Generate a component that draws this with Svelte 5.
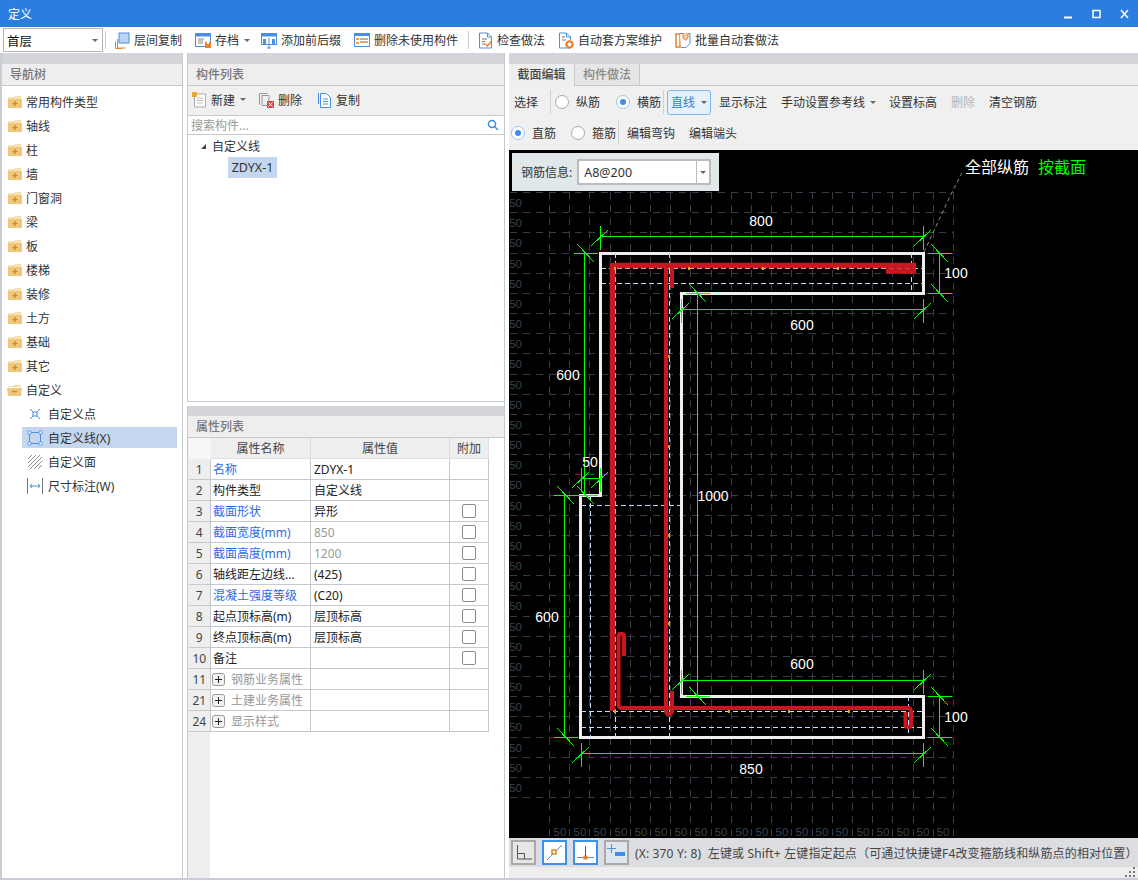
<script>
  const navItems = ['常用构件类型', '轴线', '柱', '墙', '门窗洞', '梁', '板', '楼梯', '装修', '土方', '基础', '其它'];

  const props = [
    { no: 1, name: '名称', value: 'ZDYX-1', blue: true },
    { no: 2, name: '构件类型', value: '自定义线' },
    { no: 3, name: '截面形状', value: '异形', blue: true, check: true },
    { no: 4, name: '截面宽度(mm)', value: '850', blue: true, check: true, dim: true },
    { no: 5, name: '截面高度(mm)', value: '1200', blue: true, check: true, dim: true },
    { no: 6, name: '轴线距左边线...', value: '(425)', check: true },
    { no: 7, name: '混凝土强度等级', value: '(C20)', blue: true, check: true },
    { no: 8, name: '起点顶标高(m)', value: '层顶标高', check: true },
    { no: 9, name: '终点顶标高(m)', value: '层顶标高', check: true },
    { no: 10, name: '备注', value: '', check: true },
    { no: 11, name: '钢筋业务属性', group: true },
    { no: 21, name: '土建业务属性', group: true },
    { no: 24, name: '显示样式', group: true }
  ];

  // canvas drawing, coordinates are page pixels (see viewBox)
  const gridX = Array.from({ length: 21 }, (_, i) => Math.round(549 + 20.2 * i) + 0.5);
  const gridY = Array.from({ length: 31 }, (_, i) => Math.round(192 + 20.17 * i) + 0.5);
  const sideLabels = Array.from({ length: 30 }, (_, i) => Math.round(207 + 20.17 * i));
  const bottomLabels = Array.from({ length: 20 }, (_, i) => Math.round(560 + 20.17 * i));

  const tickV = (x, y) => [[x, y - 11, x, y + 13], [x - 9, y + 9, x + 8, y - 7]];
  const tickH = (x, y) => [[x - 12, y, x + 12, y], [x - 8, y - 9, x + 9, y + 9]];

  const green = [
    [600, 236, 923, 236], ...tickV(600, 236), ...tickV(923, 236),
    [584, 253, 584, 495], ...tickH(585, 253), ...tickH(585, 495),
    [564, 495, 564, 737], ...tickH(565, 495), ...tickH(565, 737),
    [581, 478, 600, 478], ...tickV(581, 478), ...tickV(600, 478),
    [681, 309, 923, 309], ...tickV(681, 309), ...tickV(923, 309),
    [697, 293, 697, 696], ...tickH(697, 293), ...tickH(697, 696),
    [939, 253, 939, 293], ...tickH(939, 253), ...tickH(939, 293),
    [939, 696, 939, 737], ...tickH(939, 696), ...tickH(939, 737),
    [681, 680, 923, 680], ...tickV(681, 680), ...tickV(923, 680),
    [581, 753, 923, 753], ...tickV(581, 753), ...tickV(923, 753)
  ];

  const dashed = [
    [601, 268.5, 923, 268.5], [601, 283.5, 923, 283.5],
    [581, 711.5, 923, 711.5], [581, 727.5, 923, 727.5],
    [581, 505.5, 681, 505.5],
    [615.5, 253, 615.5, 737], [669.5, 253, 669.5, 737],
    [590.5, 495, 590.5, 737],
    [911.5, 253, 911.5, 294], [908.5, 696, 908.5, 737]
  ];

  const marks = [[614, 267], [688, 267], [762, 267], [837, 267], [668, 355], [668, 445], [668, 534], [668, 622], [614, 710], [728, 710], [788, 710], [848, 710]];

  const dimLabels = [
    ['800', 761, 226], ['600', 802, 330], ['100', 956, 278], ['600', 568, 380], ['50', 590, 467],
    ['1000', 713, 501], ['600', 547, 622], ['600', 802, 669], ['100', 956, 722], ['850', 751, 774]
  ];
</script>

{#snippet folder(open)}
  <svg class="ico" width="16" height="14" viewBox="0 0 16 14">
    {#if open}
      <path d="M1 3h5l1-1h7v2H1z" fill="#f4dca6" />
      <path d="M0 5h15l-1 8H1z" fill="#efc87e" />
      <path d="M5 8.500h5" stroke="#c98f2c" stroke-width="1.500" />
    {:else}
      <path d="M1 2h6l1-1h6v3H1z" fill="#f6e2b5" />
      <rect x="1" y="4" width="14" height="9" fill="#efc87e" />
      <path d="M8 6v5M5.500 8.500h5" stroke="#c98f2c" stroke-width="1.500" />
    {/if}
  </svg>
{/snippet}

<div class="window">
  <header class="titlebar">
    <span class="title">定义</span>
    <div class="winbtns">
      <svg width="70" height="14" viewBox="0 0 70 14">
        <path d="M3 10.500h8" stroke="#fff" stroke-width="2" />
        <rect x="32" y="3.500" width="7" height="7" fill="none" stroke="#fff" stroke-width="1.500" />
        <path d="M60 3l7 8M67 3l-7 8" stroke="#fff" stroke-width="1.500" />
      </svg>
    </div>
  </header>

  <div class="toolbar">
    <div class="floor">首层<i class="caret"></i></div>
    <span class="sep"></span>
    <div class="tools">
      <span class="tool">
        <svg class="ico" width="16" height="17" viewBox="-1 0 16 17">
          <path d="M2.500 7v9h8M0.500 9.500v7h6" fill="none" stroke="#e8822a" />
          <rect x="4" y="1" width="10" height="10" fill="#b9d4f5" stroke="#4a90e2" />
        </svg>
        层间复制
      </span>
      <span class="tool narrow">
        <svg class="ico" width="16" height="16" viewBox="0 0 16 16">
          <rect x="0.500" y="1.500" width="15" height="13" fill="#fff" stroke="#4a90e2" />
          <rect x="0.500" y="1.500" width="15" height="3" fill="#4a90e2" />
          <path d="M3 7h6M3 9h5M3 11h5" stroke="#888" />
          <rect x="10" y="10" width="6" height="6" fill="#e8822a" />
          <rect x="12" y="10" width="2" height="2" fill="#fff" />
        </svg>
        存档<i class="caret tool-caret"></i>
      </span>
      <span class="tool">
        <svg class="ico" width="16" height="17" viewBox="0 0 16 17">
          <rect x="0.500" y="1.500" width="15" height="11" fill="#fff" stroke="#4a90e2" />
          <rect x="0.500" y="1.500" width="15" height="3" fill="#4a90e2" />
          <rect x="2" y="7" width="3" height="5" fill="#4a90e2" />
          <rect x="11" y="7" width="3" height="5" fill="#4a90e2" />
          <path d="M8 6v10M6 16h4" stroke="#4a90e2" />
        </svg>
        添加前后缀
      </span>
      <span class="tool">
        <svg class="ico" width="16" height="16" viewBox="0 0 16 16">
          <rect x="0.500" y="1.500" width="15" height="13" fill="#fff" stroke="#4a90e2" />
          <rect x="0.500" y="1.500" width="15" height="2.500" fill="#4a90e2" />
          <path d="M6 7h8M6 10h8" stroke="#666" />
          <path d="M2 6h3v2H2zM2 10h3v2H2z" fill="#f2a33a" />
        </svg>
        删除未使用构件
      </span>
      <span class="sep wide"></span>
      <span class="tool">
        <svg class="ico" width="15" height="17" viewBox="0 0 15 17">
          <path d="M1.500 1v15h12V5l-4-4z" fill="#fff" stroke="#4a90e2" />
          <path d="M9.500 1v4h4" fill="none" stroke="#4a90e2" />
          <path d="M4 7h5M4 9.500h3M4 12h3" stroke="#777" />
          <path d="M7.500 12l2 2 4-5" fill="none" stroke="#e8822a" stroke-width="1.500" />
        </svg>
        检查做法
      </span>
      <span class="tool">
        <svg class="ico" width="16" height="17" viewBox="0 0 16 17">
          <path d="M1.500 1v15h8M12.500 8V5l-4-4h-7" fill="#fff" stroke="#4a90e2" />
          <path d="M8.500 1v4h4" fill="none" stroke="#4a90e2" />
          <path d="M4 5h3M4 8h4" stroke="#777" />
          <circle cx="11.500" cy="12.500" r="3" fill="none" stroke="#e8822a" stroke-width="2" />
          <path d="M11.500 8v1.500M11.500 15.500V17M7 12.500h1.500M14.500 12.500H16" stroke="#e8822a" stroke-width="1.500" />
        </svg>
        自动套方案维护
      </span>
      <span class="tool">
        <svg class="ico" width="16" height="17" viewBox="0 0 16 17">
          <rect x="1" y="2" width="4" height="13" fill="none" stroke="#e8822a" stroke-width="1.500" />
          <path d="M5 1.500h10v10l-4 4H6" fill="#fff" stroke="#4a90e2" />
          <path d="M8 1v5l2.500 2.500L13 6V1" fill="#f7c99a" stroke="#e8822a" />
        </svg>
        批量自动套做法
      </span>
    </div>
  </div>

  <div class="main">
    <section class="pane left">
      <div class="strip"></div>
      <h2>导航树</h2>
      <div class="nav">
        {#each navItems as item}
          <div class="nav-row">{@render folder(false)}<span>{item}</span></div>
        {/each}
        <div class="nav-row">{@render folder(true)}<span>自定义</span></div>
        <div class="nav-row child">
          <svg class="ico" width="16" height="16" viewBox="0 0 16 16">
            <path d="M3 3l10 10M13 3L3 13" stroke="#4a90e2" />
            <rect x="6" y="6" width="4" height="4" fill="#fff" stroke="#4a90e2" />
          </svg>
          <span>自定义点</span>
        </div>
        <div class="nav-row child selected">
          <svg class="ico" width="16" height="16" viewBox="0 0 16 16">
            <rect x="2.500" y="2.500" width="11" height="11" fill="none" stroke="#4a90e2" />
            <path d="M1 1h3v3H1zM12 1h3v3h-3zM1 12h3v3H1zM12 12h3v3h-3z" fill="#fff" stroke="#4a90e2" stroke-width="0.800" />
          </svg>
          <span>自定义线(X)</span>
        </div>
        <div class="nav-row child">
          <svg class="ico" width="16" height="16" viewBox="0 0 16 16">
            <path d="M1 5l4-4M1 9l8-8M1 13L13 1M3 15L15 3M7 15l8-8M11 15l4-4" stroke="#8a8f98" />
          </svg>
          <span>自定义面</span>
        </div>
        <div class="nav-row child">
          <svg class="ico" width="16" height="16" viewBox="0 0 16 16">
            <path d="M0.500 0v16M15.500 0v16" stroke="#777" />
            <path d="M3 8h10M5 6L3 8l2 2M11 6l2 2-2 2" fill="none" stroke="#4a90e2" />
          </svg>
          <span>尺寸标注(W)</span>
        </div>
      </div>
    </section>

    <div class="pane mid">
      <section class="parts">
        <div class="strip"></div>
        <h2>构件列表</h2>
        <div class="parts-bar">
          <span class="tool">
            <svg class="ico" width="15" height="16" viewBox="0 0 15 16">
              <path d="M2.500 2v13h11V2z" fill="#fff" stroke="#aaa" />
              <path d="M5 6h6M5 8.500h6M5 11h6" stroke="#bbb" />
              <rect x="0" y="0" width="5" height="5" fill="#f2a33a" />
            </svg>
            新建<i class="caret tool-caret"></i>
          </span>
          <span class="tool">
            <svg class="ico" width="15" height="16" viewBox="0 0 15 16">
              <path d="M0.500 1.500h8M0.500 1.500v11M3 3.500h7v10H3z" fill="none" stroke="#999" />
              <rect x="8" y="9" width="7" height="7" fill="#e0454a" />
              <path d="M9.500 10.500l4 4M13.500 10.500l-4 4" stroke="#fff" />
            </svg>
            删除
          </span>
          <span class="tool copy">
            <svg class="ico" width="15" height="16" viewBox="0 0 15 16">
              <path d="M1.500 1v11" stroke="#4a90e2" />
              <path d="M3.500 1.500v14h10v-10l-4-4z" fill="#fff" stroke="#4a90e2" />
              <path d="M6 7h5M6 9.500h5M6 12h5" stroke="#4a90e2" />
            </svg>
            复制
          </span>
        </div>
        <div class="search">
          <span>搜索构件...</span>
          <svg width="12" height="12" viewBox="0 0 12 12">
            <circle cx="5" cy="5" r="3.500" fill="none" stroke="#3b8eea" stroke-width="1.500" />
            <path d="M7.500 7.500L11 11" stroke="#3b8eea" stroke-width="1.500" />
          </svg>
        </div>
        <div class="parts-tree">
          <div class="tree-root"><i class="tri"></i>自定义线</div>
          <div class="tree-leaf">ZDYX-1</div>
        </div>
      </section>

      <section class="props">
        <div class="strip thin"></div>
        <h2>属性列表</h2>
        <div class="props-body">
          <table>
            <colgroup><col class="c0" /><col class="c1" /><col class="c2" /><col class="c3" /></colgroup>
            <thead>
              <tr><th class="corner"></th><th>属性名称</th><th>属性值</th><th>附加</th></tr>
            </thead>
            <tbody>
              {#each props as p}
                <tr>
                  <td class="no">{p.no}</td>
                  <td class="name" class:blue={p.blue} class:group={p.group}>
                    {#if p.group}
                      <svg class="plus" width="13" height="13" viewBox="0 0 13 13">
                        <rect x="0.500" y="0.500" width="12" height="12" rx="2" fill="#f2f2f2" stroke="#999" />
                        <path d="M3 6.500h7M6.500 3v7" stroke="#222" />
                      </svg>
                    {/if}
                    {p.name}
                  </td>
                  <td class:dim={p.dim}>{p.value ?? ''}</td>
                  <td class="chk">{#if p.check}<span class="box"></span>{/if}</td>
                </tr>
              {/each}
            </tbody>
          </table>
        </div>
      </section>
    </div>

    <section class="pane right">
      <div class="strip"></div>
      <div class="tabs">
        <span class="tab active">截面编辑</span>
        <span class="tab">构件做法</span>
      </div>
      <div class="editbar">
        <span class="cmd first">选择</span>
        <span class="vsep"></span>
        <span class="radio"></span><span class="rlabel">纵筋</span>
        <span class="radio on lead"></span><span class="rlabel">横筋</span>
        <span class="vsep tight"></span>
        <span class="linebtn">直线<i class="caret"></i></span>
        <span class="cmd">显示标注</span>
        <span class="cmd guide">手动设置参考线<i class="caret tool-caret"></i></span>
        <span class="cmd">设置标高</span>
        <span class="cmd off">删除</span>
        <span class="cmd">清空钢筋</span>
      </div>
      <div class="editbar second">
        <span class="radio on"></span><span class="rlabel">直筋</span>
        <span class="radio lead2"></span><span class="rlabel">箍筋</span>
        <span class="vsep tight"></span>
        <span class="cmd near">编辑弯钩</span>
        <span class="cmd">编辑端头</span>
      </div>

      <div class="canvas">
        <svg class="drawing" width="629" height="688" viewBox="509 150 629 688">
          <g class="crisp" stroke="#363c48" stroke-dasharray="7 6">
            {#each gridX as x}<line x1={x} y1="192" x2={x} y2="836" />{/each}
            {#each gridY as y}<line x1="510" y1={y} x2="953" y2={y} />{/each}
          </g>
          <g class="faint">
            {#each sideLabels as y}<text x="522" {y} text-anchor="end">50</text>{/each}
            {#each bottomLabels as x}<text {x} y="835.5" text-anchor="middle">50</text>{/each}
          </g>

          <polygon class="crisp" points="600.5,253.5 923.5,253.5 923.5,293.5 681.5,293.5 681.5,696.5 923.5,696.5 923.5,737.5 580.5,737.5 580.5,495.5 600.5,495.5" fill="none" stroke="#eeeeee" stroke-width="3" />

          <g class="crisp" stroke="#c4dcf8" stroke-dasharray="5 3">
            {#each dashed as d}<line x1={d[0]} y1={d[1]} x2={d[2]} y2={d[3]} />{/each}
          </g>

          <g fill="none" stroke="#c8171f" stroke-linejoin="round">
            <path d="M612.500 711V265.500H916" stroke-width="5.500" />
            <path d="M886 271H916" stroke-width="5.500" />
            <path d="M666 265V710Q666 714 669 714Q672 714 672 710V691" stroke-width="4" />
            <path d="M672 265V288" stroke-width="4" />
            <path d="M624 656V636Q624 634 622 634H620Q618.500 634 618.500 636V704Q618.500 708 622 708H908Q911 708 911 712V725Q911 727 908 727Q905.500 727 905.500 725V712" stroke-width="4" />
          </g>
          {#each marks as m}<rect x={m[0]} y={m[1]} width="2" height="3" fill="#e8a41e" />{/each}

          <g class="crisp" stroke="#00ff00" transform="translate(0.5 0.5)">
            {#each green as g}<line x1={g[0]} y1={g[1]} x2={g[2]} y2={g[3]} />{/each}
          </g>
          <polyline points="924,252 953,190 962,173" fill="none" stroke="#8a8a8a" stroke-dasharray="4 3" />

          <g class="dimtext">
            {#each dimLabels as l}<text x={l[1]} y={l[2]} text-anchor="middle">{l[0]}</text>{/each}
          </g>
          <text class="caption" x="965" y="173" fill="#fff">全部纵筋</text>
          <text class="caption" x="1038" y="173" fill="#00ff00">按截面</text>
        </svg>

        <div class="rebar-info">
          <span>钢筋信息:</span>
          <div class="rebar-input"><span class="val">A8@200</span><span class="drop"><i class="caret"></i></span></div>
        </div>
      </div>

      <div class="status">
        <span class="sbtn">
          <svg width="21" height="21" viewBox="0 0 21 21"><path d="M4.500 3v14H19M4.500 11.500h7v5.500" fill="none" stroke="#555" /></svg>
        </span>
        <span class="sbtn on">
          <svg width="21" height="21" viewBox="0 0 21 21"><path d="M3 18L18 3" stroke="#4a90e2" /><rect x="8" y="8" width="4" height="4" fill="#fff" stroke="#e8822a" stroke-width="1.500" /></svg>
        </span>
        <span class="sbtn on">
          <svg width="21" height="21" viewBox="0 0 21 21"><path d="M2 15.500h17" stroke="#4a90e2" /><path d="M10.500 4v11" stroke="#555" /><rect x="8.500" y="13.500" width="4" height="4" fill="#e8822a" /></svg>
        </span>
        <span class="sbtn last">
          <svg width="21" height="21" viewBox="0 0 21 21"><path d="M5.500 2v9M1 6.500h9" stroke="#4a90e2" /><rect x="9" y="10" width="10" height="4" fill="#3b8eea" /></svg>
        </span>
        <span class="status-text">(X: 370 Y: 8)&nbsp; 左键或 Shift+ 左键指定起点（可通过快捷键F4改变箍筋线和纵筋点的相对位置）</span>
      </div>
      <div class="grip">
        <svg width="12" height="10" viewBox="0 0 12 10" fill="#777">
          <rect x="8" y="0" width="2" height="2" /><rect x="4" y="4" width="2" height="2" /><rect x="8" y="4" width="2" height="2" />
          <rect x="0" y="8" width="2" height="2" /><rect x="4" y="8" width="2" height="2" /><rect x="8" y="8" width="2" height="2" />
        </svg>
      </div>
    </section>
  </div>
</div>

<style>
  :global(body) {
    margin: 0;
    background: #fff;
  }

  .window {
    width: 1138px;
    height: 880px;
    display: flex;
    flex-direction: column;
    overflow: hidden;
    font-family: "Noto Sans", "Noto Sans CJK SC", sans-serif;
    font-size: 12px;
    color: #333;
    background: #fff;
  }

  .titlebar {
    height: 27px;
    flex: none;
    background: #2c7de0;
    color: #fff;
    display: flex;
    align-items: center;
    justify-content: space-between;
    padding: 0 7px 0 8px;
  }
  .winbtns { display: flex; margin-top: 1px; }
  .winbtns svg { display: block; }

  .toolbar {
    height: 26px;
    flex: none;
    display: flex;
    align-items: center;
    background: #fff;
    padding-left: 3px;
    box-sizing: border-box;
  }
  .floor {
    width: 100px;
    height: 24px;
    box-sizing: border-box;
    border: 1px solid #b5b5b5;
    padding-left: 3px;
    display: flex;
    align-items: center;
    justify-content: space-between;
    padding-right: 4px;
    font-size: 12.500px;
    color: #111;
  }
  .caret {
    display: inline-block;
    width: 0;
    height: 0;
    border-left: 3px solid transparent;
    border-right: 3px solid transparent;
    border-top: 3px solid #666;
  }
  .tool-caret { margin-left: 5px; }
  .tool .tool-caret { margin-left: 1px; }
  .sep {
    width: 1px;
    height: 18px;
    background: #ccc;
    margin-left: 2px;
    margin-right: 8px;
  }
  .sep.wide { margin: 0 -4px 0 -3px; }
  .tools {
    display: flex;
    align-items: center;
    gap: 13px;
  }
  .tool {
    display: inline-flex;
    align-items: center;
    white-space: nowrap;
    gap: 4px;
  }
  .tool.narrow { margin-right: -2px; }
  .ico { flex: none; display: block; }

  .main {
    flex: 1;
    min-height: 0;
    display: flex;
    border-left: 2px solid #c9cdd6;
    border-bottom: 2px solid #c9cdd6;
  }
  .pane {
    display: flex;
    flex-direction: column;
    min-width: 0;
  }
  .strip {
    height: 11px;
    flex: none;
    background: #d3d5da;
  }
  .strip.thin { height: 10px; }
  h2 {
    margin: 0;
    height: 22px;
    line-height: 22px;
    box-sizing: border-box;
    padding-left: 8px;
    font-size: 12px;
    font-weight: 500;
    color: #777;
    background: #eee;
    border-bottom: 1px solid #c5c8cd;
  }

  .left {
    width: 181px;
    border-right: 1px solid #c5c8cd;
    box-sizing: border-box;
    margin-right: 4px;
  }
  .nav { padding-top: 4px; }
  .nav-row {
    height: 24px;
    display: flex;
    align-items: center;
    gap: 3px;
    padding-left: 5px;
  }
  .nav-row.child {
    padding-left: 25px;
    gap: 5px;
  }
  .nav-row.child.selected {
    background: #c5d7ee;
    margin: 1px 5px 2px 20px;
    padding-left: 5px;
    height: 21px;
  }

  .mid {
    width: 318px;
    box-sizing: border-box;
    margin-right: 4px;
    border-right: 1px solid #c5c8cd;
  }
  .parts {
    height: 349px;
    flex: none;
    display: flex;
    flex-direction: column;
    border-left: 1px solid #c5c8cd;
  }
  .parts-bar {
    height: 30px;
    flex: none;
    background: #f0f0f0;
    display: flex;
    align-items: center;
    gap: 13px;
    padding: 0 0 2px 4px;
    border-bottom: 1px solid #c5c8cd;
    box-sizing: border-box;
  }
  .tool.copy { margin-left: 2px; }
  .search {
    height: 18px;
    flex: none;
    display: flex;
    align-items: center;
    justify-content: space-between;
    padding: 0 5px 0 3px;
    color: #999;
    border-bottom: 1px solid #c5c8cd;
  }
  .parts-tree {
    flex: 1;
    border-bottom: 1px solid #c5c8cd;
    padding: 0 0 0 13px;
  }
  .tree-root {
    height: 22px;
    display: flex;
    align-items: center;
    gap: 6px;
  }
  .tri {
    width: 0;
    height: 0;
    border-left: 5px solid transparent;
    border-bottom: 5px solid #444;
  }
  .tree-leaf {
    width: 49px;
    height: 21px;
    line-height: 21px;
    margin-left: 27px;
    background: #c5d7ee;
    text-align: center;
    font-size: 12.500px;
  }

  .props {
    flex: 1;
    margin-top: 4px;
    display: flex;
    flex-direction: column;
    min-height: 0;
    border-left: 1px solid #c5c8cd;
  }
  .props-body {
    flex: 1;
    background: linear-gradient(to right, #eee 22px, #fff 22px);
  }
  table {
    border-collapse: collapse;
    table-layout: fixed;
    width: 300px;
    font-size: 12px;
  }
  .c0 { width: 22px; }
  .c1 { width: 100px; }
  .c2 { width: 139px; }
  .c3 { width: 39px; }
  th {
    height: 20px;
    padding: 0;
    font-weight: 400;
    background: #eee;
    color: #444;
    border: 1px solid #dcdee2;
    border-top: 0;
  }
  th.corner { background: #f7f7f7; border-color: transparent; }
  td {
    height: 20px;
    padding: 0 0 0 3px;
    border: 1px solid #c5c8cd;
    background: #fff;
    color: #222;
    white-space: nowrap;
    overflow: hidden;
  }
  td.name { padding-left: 2px; }
  td.no {
    background: #eee;
    padding: 0;
    text-align: center;
    color: #444;
    border-left: 0;
  }
  td.blue { color: #2f6ae5; }
  td.dim { color: #999; }
  td.group { color: #999; padding-left: 1px; }
  .plus { vertical-align: -2px; margin-right: 3px; }
  td.chk { padding: 0; text-align: center; }
  .box {
    display: block;
    width: 12px;
    height: 12px;
    margin: 0 auto;
    border: 1px solid #8a8a8a;
    border-radius: 2px;
    background: #fff;
  }

  .right { flex: 1; }
  .tabs {
    height: 22px;
    flex: none;
    display: flex;
    background: #eee;
    border-bottom: 1px solid #c5c8cd;
    box-sizing: border-box;
  }
  .tab {
    width: 65px;
    text-align: center;
    line-height: 21px;
    font-weight: 500;
    color: #888;
    background: #e6e6e6;
    border-right: 1px solid #c5c8cd;
    box-sizing: border-box;
  }
  .tab.active {
    color: #444;
    background: #eee;
    border-right: 1px solid #c5c8cd;
    height: 22px;
    width: 66px;
  }
  .editbar {
    height: 32px;
    flex: none;
    display: flex;
    align-items: center;
    background: #f0f0f0;
  }
  .editbar.second { padding: 0 0 2px 2px; box-sizing: border-box; }
  .cmd {
    white-space: nowrap;
    margin-right: 14px;
    display: inline-flex;
    align-items: center;
  }
  .cmd.first { margin: 0 12px 0 5px; }
  .cmd.guide { margin-right: 13px; }
  .cmd.near { margin-left: 5px; }
  .cmd.off { color: #b5b5b5; }
  .vsep {
    width: 1px;
    height: 24px;
    background: #d0d0d0;
    margin-right: 4px;
  }
  .vsep.tight { margin: 0 3px 0 2px; }
  .radio {
    width: 12px;
    height: 12px;
    border: 1px solid #a8a8a8;
    border-radius: 50%;
    background: #fff;
    flex: none;
    position: relative;
  }
  .radio.on { border-color: #9cc4ee; }
  .radio.on::after {
    content: '';
    position: absolute;
    left: 3px;
    top: 3px;
    width: 6px;
    height: 6px;
    border-radius: 50%;
    background: #3b8eea;
  }
  .radio.lead { margin-left: 16px; }
  .radio.lead2 { margin-left: 15px; }
  .rlabel { margin-left: 7px; white-space: nowrap; }
  .linebtn {
    width: 44px;
    height: 25px;
    box-sizing: border-box;
    border: 1px solid #7db8f0;
    border-radius: 3px;
    background: #e6f1fc;
    color: #2f7fd8;
    display: inline-flex;
    align-items: center;
    padding-left: 3px;
    gap: 6px;
    margin-right: 8px;
  }

  .canvas {
    position: relative;
    height: 688px;
    flex: none;
    background: #000;
    overflow: hidden;
  }
  .drawing { display: block; }
  .crisp { shape-rendering: crispEdges; }
  .faint text {
    font-family: "Liberation Sans", sans-serif;
    font-size: 11.500px;
    fill: #3c4048;
  }
  .dimtext text {
    font-family: "Liberation Sans", sans-serif;
    font-size: 14px;
    fill: #fff;
  }
  .caption {
    font-family: "Noto Sans CJK SC", sans-serif;
    font-size: 16px;
  }
  .rebar-info {
    position: absolute;
    left: 3px;
    top: 3px;
    width: 207px;
    height: 38px;
    background: #e1e8ea;
    display: flex;
    align-items: center;
    gap: 5px;
    padding-left: 9px;
    box-sizing: border-box;
    color: #333;
  }
  .rebar-input {
    width: 134px;
    height: 26px;
    box-sizing: border-box;
    border: 2px solid #bcbcbc;
    background: #fff;
    display: flex;
    align-items: center;
    justify-content: space-between;
  }
  .val { padding-left: 5px; font-size: 12.500px; }
  .drop {
    width: 12px;
    height: 22px;
    border-left: 1px solid #bcbcbc;
    display: flex;
    align-items: center;
    justify-content: center;
  }

  .status {
    height: 29px;
    flex: none;
    display: flex;
    align-items: center;
    gap: 6px;
    padding-left: 2px;
    background: #dcdde0;
    box-sizing: border-box;
  }
  .sbtn {
    width: 25px;
    height: 25px;
    box-sizing: border-box;
    border: 2px solid #a9a9a9;
    background: #e6e6e6;
    display: inline-flex;
    align-items: center;
    justify-content: center;
    flex: none;
  }
  .sbtn.on { border-color: #3b92ec; background: #fff; }
  .sbtn.last { background: #e0e6ee; }
  .sbtn svg { display: block; }
  .status-text { white-space: nowrap; color: #444; letter-spacing: 0.150px; }
  .grip {
    flex: 1;
    background: #eee;
    display: flex;
    justify-content: flex-end;
    padding-right: 1px;
    align-items: flex-start;
  }
  .grip svg { display: block; }
</style>
